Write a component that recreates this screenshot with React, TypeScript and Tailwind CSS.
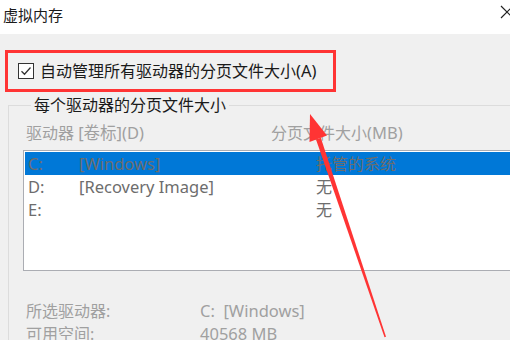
const font = { fontFamily: '"Noto Sans", "Noto Sans CJK SC", sans-serif' };

const drives = [
  { letter: 'C:', label: '[Windows]', size: '托管的系统', selected: true },
  { letter: 'D:', label: '[Recovery Image]', size: '无', selected: false },
  { letter: 'E:', label: '', size: '无', selected: false },
];

function CheckBox() {
  return (
    <div className="flex h-[16px] w-[16px] shrink-0 items-center justify-center border border-[#333333] bg-white">
      <svg width="12" height="12" viewBox="0 0 12 12">
        <path d="M1.5 6.2 L4.5 9.2 L10.5 2.5" fill="none" stroke="#333333" strokeWidth="1.3" />
      </svg>
    </div>
  );
}

export default function App() {
  return (
    <div
      className="relative h-[340px] w-[510px] overflow-hidden bg-[#f0f0f0] text-[16px] leading-[16px]"
      style={font}
    >
      {/* title bar */}
      <div className="flex h-[34px] items-start justify-between bg-white pl-[3px]">
        <span className="mt-[7px] text-[15px] text-[#1a1a1a]">虚拟内存</span>
        <svg width="14" height="14" viewBox="0 0 14 14" className="mr-[-4px] mt-[5px]">
          <path d="M1 1 L13 13 M13 1 L1 13" stroke="#222" strokeWidth="1.2" />
        </svg>
      </div>

      {/* auto manage checkbox, highlighted */}
      <div className="ml-[5px] mt-[16px] flex h-[42px] w-[331px] items-center border-[3px] border-[#ff3434] pl-[10px]">
        <CheckBox />
        <span className="ml-[6px] whitespace-nowrap text-[#1a1a1a]">
          自动管理所有驱动器的分页文件大小<span className="text-[16.5px]">(A)</span>
        </span>
      </div>

      {/* group box */}
      <fieldset className="ml-[8px] mt-[5px] w-[520px] border border-[#dcdcdc] pl-[14px]">
        <legend className="ml-[8px] px-[3px] text-[#1a1a1a]">每个驱动器的分页文件大小</legend>

        <div className="mt-[12px] flex h-[16px] text-[#a0a0a0]">
          <span className="w-[248px] pl-[3px]">
            驱动器 <span className="text-[16.5px]">[卷标](D)</span>
          </span>
          <span>
            分页文件大小<span className="text-[16.5px]">(MB)</span>
          </span>
        </div>

        <div className="mt-[9px] h-[121px] border border-[#abadb3] bg-white p-[1px]">
          {drives.map((d) => (
            <div
              key={d.letter}
              className={`flex h-[23px] items-center text-[16.5px] text-[#6d6d6d] ${
                d.selected ? 'bg-[#0078d7]' : ''
              }`}
            >
              <span className="w-[54px] pl-[3px]">{d.letter}</span>
              <span className="w-[237px] whitespace-nowrap">{d.label}</span>
              <span className="text-[16px]">{d.size}</span>
            </div>
          ))}
        </div>

        <div className="mt-[30px] flex h-[20px] items-center text-[#a0a0a0]">
          <span className="w-[177px] pl-[3px]">所选驱动器:</span>
          <span className="text-[16.5px]">C:&nbsp;&nbsp;[Windows]</span>
        </div>
        <div className="mt-[3px] flex h-[20px] items-center text-[#a0a0a0]">
          <span className="w-[177px] pl-[3px]">可用空间:</span>
          <span className="text-[16.5px]">40568 MB</span>
        </div>
      </fieldset>

      {/* annotation arrow */}
      <svg
        className="pointer-events-none absolute left-0 top-0"
        width="510"
        height="340"
        viewBox="0 0 510 340"
      >
        <polygon points="310,114 309.5,142 327,135.5" fill="#ff3434" />
        <polygon points="316,139.4 320.8,137.8 386,336.7 384.5,337.3" fill="#ff3434" />
      </svg>
    </div>
  );
}
